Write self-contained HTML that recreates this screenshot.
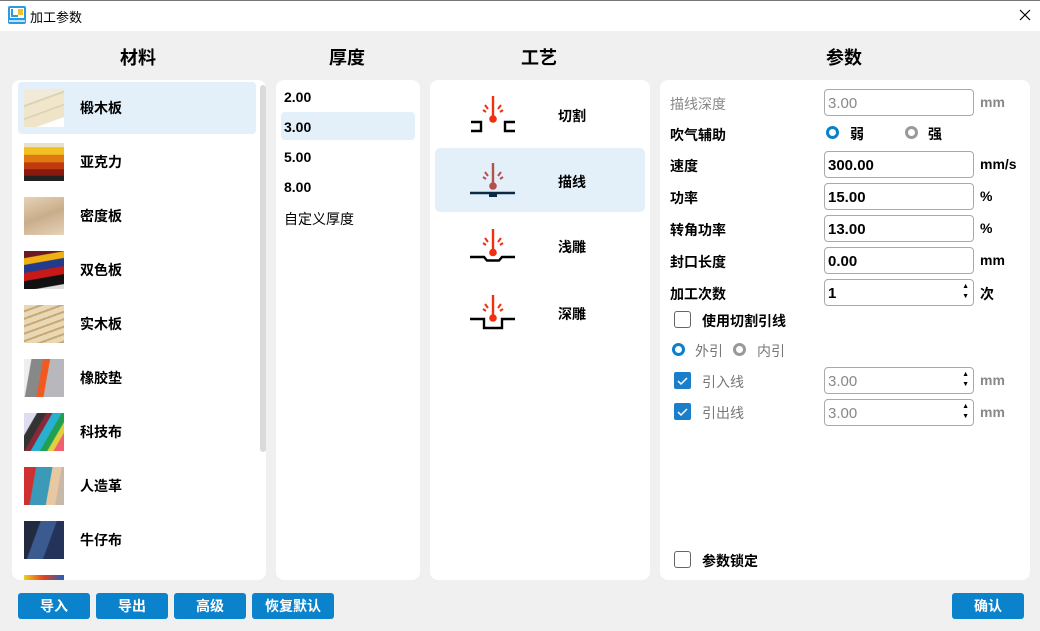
<!DOCTYPE html>
<html><head><meta charset="utf-8"><style>
*{margin:0;padding:0;box-sizing:border-box}
body{width:1040px;height:631px;background:#f0f0f0;font-family:"Liberation Sans","Noto Sans CJK SC",sans-serif;position:relative;overflow:hidden;color:#000}
.a{position:absolute}
.title{left:0;top:0;width:1040px;height:31px;background:#fff;border-top:1px solid #777}
.h{font-size:18px;font-weight:bold;top:44px}
.panel{background:#fff;border-radius:8px}
.mrow{left:18px;width:238px;height:52px}
.mimg{left:6px;top:7px;width:40px;height:38px}
.mtxt{left:62px;top:16px;font-size:14px;font-weight:bold}
.t{font-size:14px;font-weight:bold;left:284px}
.p{font-size:14px;font-weight:bold;left:558px}
.lab{left:670px;font-size:14px;font-weight:bold}
.inp{left:824px;width:150px;height:27px;border:1px solid #aaa;border-radius:4px;background:#fff;font-size:15px;font-weight:bold;padding:5px 0 0 3px}
.g{color:#888;font-weight:normal}
.unit{left:980px;font-size:14px;font-weight:bold}
.spin{position:absolute;right:4px;top:2px;font-size:7px;line-height:10px;color:#000}
.cb{left:674px;width:17px;height:17px;border:1px solid #666;border-radius:3px;background:#fff}
.cbc{left:674px;width:17px;height:17px;background:#1a7fc8;border-radius:2px}
.rad{width:13px;height:13px;border-radius:50%;border:3.5px solid #0a7fcc;background:#fff}
.radg{border-color:#999}
.btn{top:593px;height:26px;background:#0a82cc;color:#fff;border-radius:3px;font-size:14px;text-align:center;line-height:26px;font-weight:bold}
</style></head><body>
<div class="a title"></div>
<svg class="a" style="left:8px;top:6px" width="18" height="18" viewBox="0 0 18 18"><rect x="0" y="0" width="18" height="18" rx="2" fill="#2a9be0"/><rect x="2" y="2" width="14" height="10" fill="#fff"/><path d="M4 3v7h6" stroke="#2a9be0" stroke-width="2" fill="none"/><rect x="10" y="3" width="5" height="6" fill="#f3c22a"/><rect x="1" y="14" width="16" height="2" fill="#fff" opacity=".7"/></svg>
<div class="a" style="left:30px;top:7px;font-size:13px">加工参数</div>
<svg class="a" style="left:1019px;top:9px" width="12" height="12"><path d="M1 1l10 10M11 1L1 11" stroke="#000" stroke-width="1.2"/></svg>

<div class="a h" style="left:120px">材料</div>
<div class="a h" style="left:329px">厚度</div>
<div class="a h" style="left:521px">工艺</div>
<div class="a h" style="left:826px">参数</div>

<div class="a panel" style="left:12px;top:80px;width:254px;height:500px;overflow:hidden">
</div>
<div class="a" style="left:260px;top:85px;width:6px;height:367px;background:#dadada;border-radius:3px"></div>
<div class="a" style="left:18px;top:82px;width:238px;height:52px;background:#e3eff9;border-radius:4px"></div>
<div class="a mrow" style="top:82px"><div class="a mimg" style="background:linear-gradient(160deg,#f1ead8 0 30%,#d8cba8 32%,#efe6cc 36% 55%,#d8cba8 57%,#efe4c8 60% 80%,#fff 82%)"></div><div class="a mtxt">椴木板</div></div>
<div class="a mrow" style="top:136px"><div class="a mimg" style="background:linear-gradient(180deg,#e8e0c8 0 10%,#f2c020 12% 30%,#e07a10 32% 50%,#c03a10 52% 68%,#8a1a10 70% 85%,#222 87%)"></div><div class="a mtxt">亚克力</div></div>
<div class="a mrow" style="top:190px"><div class="a mimg" style="background:linear-gradient(160deg,#e6d2b6,#c9ad8a 50%,#e6d3b8)"></div><div class="a mtxt">密度板</div></div>
<div class="a mrow" style="top:244px"><div class="a mimg" style="background:linear-gradient(170deg,#6a1a20 0 15%,#f0b010 17% 30%,#243a8a 32% 48%,#c81818 50% 66%,#111 68% 88%,#ddd 90%)"></div><div class="a mtxt">双色板</div></div>
<div class="a mrow" style="top:298px"><div class="a mimg" style="background:repeating-linear-gradient(160deg,#e8d8b4 0 5px,#c8a878 5px 7px)"></div><div class="a mtxt">实木板</div></div>
<div class="a mrow" style="top:352px"><div class="a mimg" style="background:linear-gradient(100deg,#eee 0 15%,#888 17% 40%,#f05a20 42% 55%,#b8b8bc 57%)"></div><div class="a mtxt">橡胶垫</div></div>
<div class="a mrow" style="top:406px"><div class="a mimg" style="background:linear-gradient(120deg,#dde 0 20%,#333 22% 35%,#8a2838 37% 45%,#28b0d0 47% 60%,#20a050 62% 72%,#e0d040 74% 82%,#f06070 84%)"></div><div class="a mtxt">科技布</div></div>
<div class="a mrow" style="top:460px"><div class="a mimg" style="background:linear-gradient(100deg,#d03030 0 25%,#3a9ab8 27% 60%,#e8c8a0 62% 80%,#c8b8a8 82%)"></div><div class="a mtxt">人造革</div></div>
<div class="a mrow" style="top:514px"><div class="a mimg" style="background:linear-gradient(110deg,#222a40 0 30%,#3a5a90 32% 60%,#24335a 62%)"></div><div class="a mtxt">牛仔布</div></div>
<div class="a" style="left:24px;top:575px;width:40px;height:5px;background:linear-gradient(90deg,#f0d020,#e04020 50%,#2060c0)"></div>

<div class="a panel" style="left:276px;top:80px;width:144px;height:500px"></div>
<div class="a" style="left:281px;top:112px;width:134px;height:28px;background:#e3eff9;border-radius:4px"></div>
<div class="a t" style="top:89px">2.00</div>
<div class="a t" style="top:119px">3.00</div>
<div class="a t" style="top:149px">5.00</div>
<div class="a t" style="top:179px">8.00</div>
<div class="a t" style="top:209px;font-weight:normal">自定义厚度</div>

<div class="a panel" style="left:430px;top:80px;width:220px;height:500px"></div>
<div class="a" style="left:435px;top:148px;width:210px;height:64px;background:#e3eff9;border-radius:5px"></div>
<svg class="a" style="left:0;top:0" width="1040" height="631">
<g stroke-width="2" stroke-linecap="butt" fill="none">
<g stroke="#f03010"><line x1="493" y1="96" x2="493" y2="117" stroke-width="2.4"/><path d="M483 110l3 2M485 105l3 4M503 110l-3 2M501 105l-3 4"/></g>
<circle cx="493" cy="119" r="3.8" fill="#f03010" stroke="none"/>
<path d="M471 122h10v9h-10M515 122h-10v9h10" stroke="#000" stroke-width="2.4"/>
<g stroke="#b5514b"><line x1="493" y1="163" x2="493" y2="184" stroke-width="2.4"/><path d="M483 177l3 2M485 172l3 4M503 177l-3 2M501 172l-3 4"/></g>
<circle cx="493" cy="186" r="3.8" fill="#b5514b" stroke="none"/>
<path d="M470 193h45" stroke="#0d2a45" stroke-width="2.4"/><rect x="489" y="193" width="8" height="4" fill="#0d2a45" stroke="none"/>
<g stroke="#f03010"><line x1="493" y1="229" x2="493" y2="250" stroke-width="2.4"/><path d="M483 243l3 2M485 238l3 4M503 243l-3 2M501 238l-3 4"/></g>
<circle cx="493" cy="252.5" r="3.8" fill="#f03010" stroke="none"/>
<path d="M470 257h14l3 3.5h12l3-3.5h13" stroke="#000" stroke-width="2.4"/>
<g stroke="#f03010"><line x1="493" y1="295" x2="493" y2="316" stroke-width="2.4"/><path d="M483 309l3 2M485 304l3 4M503 309l-3 2M501 304l-3 4"/></g>
<circle cx="493" cy="318" r="3.8" fill="#f03010" stroke="none"/>
<path d="M470 319h14v9h18v-9h13" stroke="#000" stroke-width="2.4"/>
</g></svg>
<div class="a p" style="top:106px">切割</div>
<div class="a p" style="top:172px">描线</div>
<div class="a p" style="top:237px">浅雕</div>
<div class="a p" style="top:304px">深雕</div>

<div class="a panel" style="left:660px;top:80px;width:370px;height:500px"></div>
<div class="a lab g" style="top:94px">描线深度</div>
<div class="a inp g" style="top:89px">3.00</div><div class="a unit g" style="top:94px">mm</div>
<div class="a lab" style="top:125px">吹气辅助</div>
<div class="a rad" style="left:826px;top:126px"></div><div class="a" style="left:850px;top:124px;font-size:14px;font-weight:bold">弱</div>
<div class="a rad radg" style="left:905px;top:126px"></div><div class="a" style="left:928px;top:124px;font-size:14px;font-weight:bold">强</div>
<div class="a lab" style="top:156px">速度</div>
<div class="a inp" style="top:151px">300.00</div><div class="a unit" style="top:156px">mm/s</div>
<div class="a lab" style="top:188px">功率</div>
<div class="a inp" style="top:183px">15.00</div><div class="a unit" style="top:188px">%</div>
<div class="a lab" style="top:220px">转角功率</div>
<div class="a inp" style="top:215px">13.00</div><div class="a unit" style="top:220px">%</div>
<div class="a lab" style="top:252px">封口长度</div>
<div class="a inp" style="top:247px">0.00</div><div class="a unit" style="top:252px">mm</div>
<div class="a lab" style="top:284px">加工次数</div>
<div class="a inp" style="top:279px">1<div class="spin">▲<br>▼</div></div><div class="a unit" style="top:284px">次</div>
<div class="a cb" style="top:311px"></div><div class="a" style="left:702px;top:311px;font-size:14px;font-weight:bold">使用切割引线</div>
<div class="a rad" style="left:672px;top:343px"></div><div class="a" style="left:695px;top:341px;font-size:14px;color:#777">外引</div>
<div class="a rad radg" style="left:733px;top:343px"></div><div class="a" style="left:757px;top:341px;font-size:14px;color:#777">内引</div>
<div class="a cbc" style="top:372px"></div><svg class="a" style="left:674px;top:372px" width="17" height="17"><path d="M4 9l3 3 6-6" stroke="#fff" stroke-width="1.5" fill="none"/></svg>
<div class="a" style="left:702px;top:372px;font-size:14px;color:#777">引入线</div>
<div class="a inp g" style="top:367px">3.00<div class="spin">▲<br>▼</div></div><div class="a unit g" style="top:372px">mm</div>
<div class="a cbc" style="top:403px"></div><svg class="a" style="left:674px;top:403px" width="17" height="17"><path d="M4 9l3 3 6-6" stroke="#fff" stroke-width="1.5" fill="none"/></svg>
<div class="a" style="left:702px;top:403px;font-size:14px;color:#777">引出线</div>
<div class="a inp g" style="top:399px">3.00<div class="spin">▲<br>▼</div></div><div class="a unit g" style="top:404px">mm</div>
<div class="a cb" style="top:551px"></div><div class="a" style="left:702px;top:551px;font-size:14px;font-weight:bold">参数锁定</div>

<div class="a btn" style="left:18px;width:72px">导入</div>
<div class="a btn" style="left:96px;width:72px">导出</div>
<div class="a btn" style="left:174px;width:72px">高级</div>
<div class="a btn" style="left:252px;width:82px">恢复默认</div>
<div class="a btn" style="left:952px;width:72px">确认</div>
</body></html>
